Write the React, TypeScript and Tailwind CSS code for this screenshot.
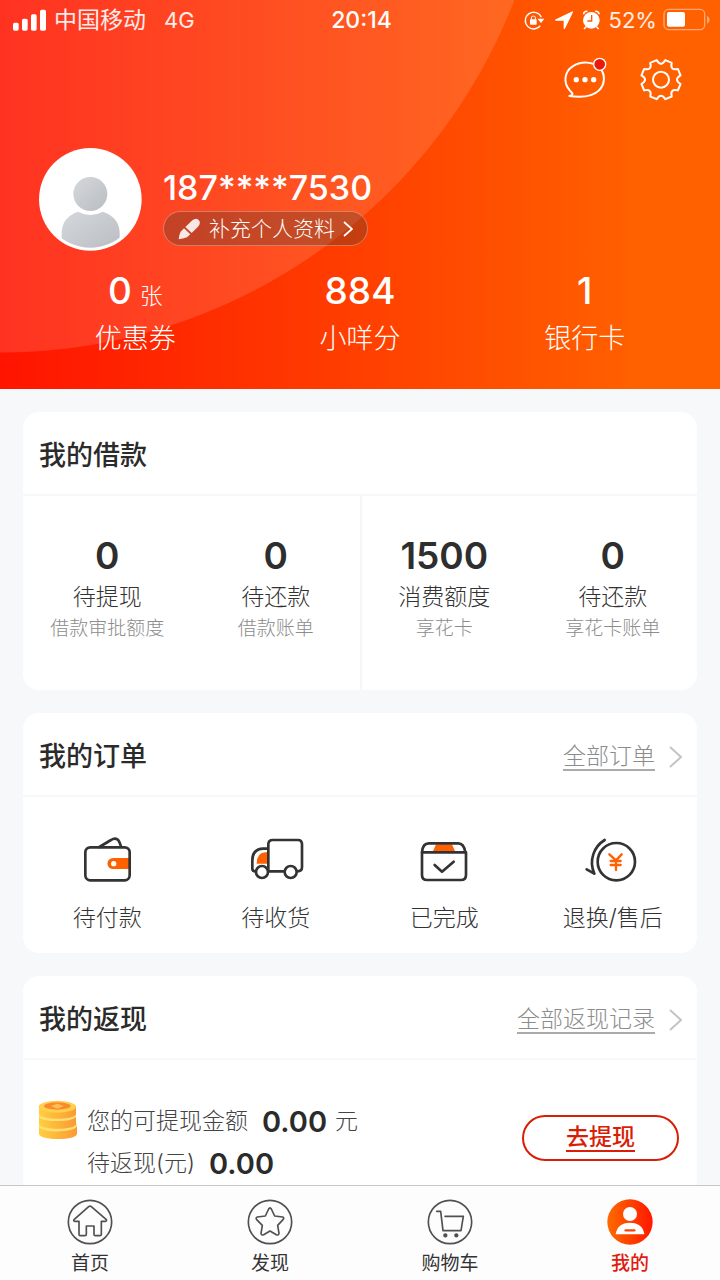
import type { ReactNode } from "react";

const INK = "#333333";
const ORANGE = "#ff6000";

function StatusBar() {
  return (
    <div className="grid h-10 grid-cols-3 items-center pr-2.5 pl-[13px] text-[23px] text-white/90">
      <div className="flex items-center">
        <svg className="h-[22px] w-[33px]" viewBox="0 0 99 66" fill="#fff" aria-hidden="true">
          <rect x="0" y="41" width="17" height="24" rx="5" />
          <rect x="27" y="29" width="17" height="36" rx="5" />
          <rect x="54" y="16" width="17" height="49" rx="5" />
          <rect x="81" y="2" width="18" height="63" rx="5" />
        </svg>
        <span className="ml-2">中国移动</span>
        <span className="ml-[18px] text-[22px]">4G</span>
      </div>
      <div className="text-center font-medium text-white">20:14</div>
      <div className="flex items-center justify-end">
        <svg className="h-6 w-20 shrink-0" viewBox="126 24 240 72" fill="none" aria-hidden="true">
          <path d="M181 52A25 25 0 1 0 178 77" stroke="#fff" strokeWidth="4" />
          <path d="M169 56h21l-10 13z" fill="#fff" />
          <rect x="147" y="58" width="20" height="16" rx="2" fill="#fff" />
          <path d="M151 59v-5a6 6 0 0 1 12 0v5" stroke="#fff" strokeWidth="3" />
          <path d="M274 36 224 60h26v25z" fill="#fff" stroke="#fff" strokeWidth="4" strokeLinejoin="round" />
          <circle cx="331" cy="61" r="25" fill="#fff" />
          <path d="M308 43a9 9 0 0 1 11-9M343 34a9 9 0 0 1 11 9M315 81l-6 6M347 81l6 6" stroke="#fff" strokeWidth="5" />
          <path d="M332 45v18h-13" stroke="#ff5a00" strokeWidth="4" />
        </svg>
        <span className="ml-1.5 text-[22px]">52%</span>
        <svg className="ml-1.5 h-6 w-[47px] shrink-0" viewBox="548 24 141 72" fill="none" aria-hidden="true">
          <rect x="551" y="28" width="122" height="61" rx="14" stroke="#fff" strokeOpacity=".45" strokeWidth="4" />
          <rect x="560" y="36" width="54" height="44" rx="6" fill="#fff" />
          <path d="M680 47q8 4 8 12t-8 12z" fill="#fff" fillOpacity=".45" />
        </svg>
      </div>
    </div>
  );
}

function gearPath(cx: number, cy: number) {
  const teeth = 8;
  const parts: string[] = [];
  const at = (deg: number, r: number) => {
    const a = (deg * Math.PI) / 180;
    return `${(cx + r * Math.cos(a)).toFixed(1)} ${(cy + r * Math.sin(a)).toFixed(1)}`;
  };
  for (let i = 0; i < teeth; i++) {
    const mid = i * (360 / teeth) + 22.5;
    parts.push(`${i === 0 ? "M" : "L"}${at(mid - 10, 60)}L${at(mid + 10, 60)}`);
    parts.push(`Q${at(mid + 15, 48)} ${at(mid + 22.5, 48)}Q${at(mid + 30, 48)} ${at(mid + 35, 60)}`);
  }
  return parts.join("") + "Z";
}

function Header() {
  const stats = [
    { value: "0", unit: "张", label: "优惠券" },
    { value: "884", label: "小咩分" },
    { value: "1", label: "银行卡" },
  ];
  return (
    <header className="bg-[radial-gradient(circle_at_0_-199px,rgba(255,255,255,.13)_551px,transparent_552px),linear-gradient(to_right,#ff1400,#ff6000_88%)] pb-[34px] text-white">
      <StatusBar />
      <div className="flex h-20 items-center justify-end gap-7 pr-[35px]">
        <button type="button" aria-label="消息">
          <svg className="h-12 w-12" viewBox="243 168 144 144" fill="none" stroke="#fff" strokeWidth="6" strokeLinejoin="round" aria-hidden="true">
            <path d="M268 288C284 284 276 278 270 272C248 248 254 214 278 199C304 182 340 185 358 203C378 222 375 253 357 271C338 290 306 293 268 288Z" />
            <g fill="#fff" stroke="none">
              <circle cx="289" cy="239" r="8" />
              <circle cx="315" cy="239" r="8" />
              <circle cx="341" cy="239" r="8" />
            </g>
            <circle cx="359" cy="193" r="18" fill="#e9190b" strokeWidth="4" />
          </svg>
        </button>
        <button type="button" aria-label="设置">
          <svg className="h-12 w-12" viewBox="471 168 144 144" fill="none" stroke="#fff" strokeWidth="6" strokeLinejoin="round" aria-hidden="true">
            <path d={gearPath(543, 239)} />
            <circle cx="543" cy="239" r="24" />
          </svg>
        </button>
      </div>
      <div className="mt-7 flex pl-[39px]">
        <svg className="h-[103px] w-[103px]" viewBox="56 54 309 309" aria-hidden="true">
          <defs>
            <linearGradient id="avatar" x1="0" y1="0" x2="1" y2="1">
              <stop offset="0" stopColor="#d5d8db" />
              <stop offset="1" stopColor="#b9bdc2" />
            </linearGradient>
            <clipPath id="avatarClip">
              <circle cx="210" cy="208" r="145" />
            </clipPath>
          </defs>
          <circle cx="210" cy="208" r="154" fill="#fff" />
          <circle cx="210" cy="192" r="51" fill="url(#avatar)" />
          <path clipPath="url(#avatarClip)" d="M173 245Q210 265 247 245Q298 262 298 310V363H124V310Q124 262 173 245Z" fill="url(#avatar)" />
        </svg>
        <div className="flex flex-col items-start pt-5 pl-[21px]">
          <div className="text-[34px] leading-[40px] font-medium">187****7530</div>
          <button type="button" className="mt-[3px] flex h-[35px] items-center rounded-full border border-white/30 bg-[#3c3c32]/30 pr-3.5 pl-3.5 text-[21px] font-light">
            <svg className="h-[22px] w-[22px]" viewBox="0 0 66 66" fill="#fff" fillOpacity=".88" aria-hidden="true">
              <path d="M22 27 43 7Q54-2 62 6T60 26L41 45Z" />
              <path d="M18 31 37 49 27 58Q15 63 2 64Q4 47 8 41Z" />
            </svg>
            <span className="ml-[9px]">补充个人资料</span>
            <svg className="ml-2 h-4 w-2.5" viewBox="0 0 10 16" fill="none" stroke="#fff" strokeWidth="1.8" aria-hidden="true">
              <path d="m1 1 8 7-8 7" />
            </svg>
          </button>
        </div>
      </div>
      <div className="mt-[18px] grid grid-cols-3 px-[23px] text-center">
        {stats.map((s) => (
          <div key={s.label}>
            <div className="flex h-11 items-baseline justify-center text-[37px] leading-[44px] font-medium">
              {s.value}
              {s.unit && <span className="ml-2 text-[23px] leading-none font-light">{s.unit}</span>}
            </div>
            <div className="mt-2.5 text-[27px] leading-8 font-light">{s.label}</div>
          </div>
        ))}
      </div>
    </header>
  );
}

function Card({ title, link, children }: { title: string; link?: string; children: ReactNode }) {
  return (
    <section className="rounded-2xl bg-white">
      <div className="flex h-[84px] items-center justify-between border-b-2 border-[#f8f8f9] pt-1.5 pr-[15px] pl-4">
        <h2 className="text-[27px] font-medium text-[#2b2b2b]">{title}</h2>
        {link && (
          <a href="#all" className="flex items-center text-[23px] font-light text-[#8c8c8c]">
            <span className="border-b-2 border-[#aaa] leading-[25px]">{link}</span>
            <svg className="ml-3.5 h-[22px] w-[13px]" viewBox="0 0 13 22" fill="none" stroke="#c4c4c8" strokeWidth="2" aria-hidden="true">
              <path d="m1 1 11 10L1 21" />
            </svg>
          </a>
        )}
      </div>
      {children}
    </section>
  );
}

function LoanCard() {
  const items = [
    { value: "0", label: "待提现", note: "借款审批额度" },
    { value: "0", label: "待还款", note: "借款账单" },
    { value: "1500", label: "消费额度", note: "享花卡" },
    { value: "0", label: "待还款", note: "享花卡账单" },
  ];
  return (
    <Card title="我的借款">
      <div className="grid grid-cols-4">
        {items.map((it, i) => (
          <div
            key={it.note}
            className={
              i === 2
                ? "border-l-2 border-[#f6f6f8] pt-[38px] pr-0.5 pb-[47px] text-center"
                : "pt-[38px] pb-[47px] text-center"
            }
          >
            <div className="text-[37px] leading-[44px] font-semibold text-[#2e2e2e]">{it.value}</div>
            <div className="mt-[3px] text-[23px] leading-8 font-light text-[#333]">{it.label}</div>
            <div className="mt-0.5 text-[19px] leading-7 font-light text-[#8c8c8c]">{it.note}</div>
          </div>
        ))}
      </div>
    </Card>
  );
}

function OrderIcon({ viewBox, children }: { viewBox: string; children: ReactNode }) {
  return (
    <svg className="h-[60px] w-[60px]" viewBox={viewBox} fill="none" stroke={INK} strokeWidth="8" strokeLinecap="round" strokeLinejoin="round" aria-hidden="true">
      {children}
    </svg>
  );
}

function OrdersCard() {
  const items = [
    {
      label: "待付款",
      icon: (
        <OrderIcon viewBox="51 27 180 180">
          <path d="M118 78 153 57Q164 50 172 55Q178 59 183 77" />
          <path d="M208 111H159a16 16 0 0 0 0 33H208Z" fill={ORANGE} stroke="none" />
          <circle cx="161" cy="128" r="8" fill="#fff" stroke="none" />
          <rect x="76" y="79" width="133" height="99" rx="15" />
        </OrderIcon>
      ),
    },
    {
      label: "待收货",
      icon: (
        <OrderIcon viewBox="557 27 180 180">
          <path d="M624 94H614Q589 96 589 128H624Z" fill={ORANGE} stroke="none" />
          <path d="M624 83H608Q576 85 576 118V143Q576 151 586 151M624 151V70Q624 57 637 57H713Q725 57 725 70V139Q725 151 711 151M624 151H672" />
          <circle cx="605" cy="153" r="18" fill="#fff" />
          <circle cx="691" cy="153" r="18" fill="#fff" />
        </OrderIcon>
      ),
    },
    {
      label: "已完成",
      icon: (
        <OrderIcon viewBox="72 27 180 180">
          <path d="M138 70H186L196 93H128Z" fill={ORANGE} stroke="none" />
          <path d="M96 94Q98 67 116 67H205Q222 67 226 94" />
          <path d="M96 94H228V162Q228 177 213 177H111Q96 177 96 162Z" />
          <path d="m134 132 22 20 35-30" />
        </OrderIcon>
      ),
    },
    {
      label: "退换/售后",
      icon: (
        <OrderIcon viewBox="578 27 180 180">
          <circle cx="678" cy="122" r="56" />
          <path d="M643 57C612 76 594 117 612 158M589 145 612 158" />
          <g stroke={ORANGE} strokeWidth="7">
            <path d="m657 100 20 18 17-18M677 118V147M661 120H691M661 132H691" />
          </g>
        </OrderIcon>
      ),
    },
  ];
  return (
    <Card title="我的订单" link="全部订单">
      <div className="grid grid-cols-4 pt-[33px] pb-[19px]">
        {items.map((it) => (
          <button type="button" key={it.label} className="flex flex-col items-center">
            {it.icon}
            <span className="mt-3 text-[23px] leading-8 font-light text-[#333]">{it.label}</span>
          </button>
        ))}
      </div>
    </Card>
  );
}

function CashbackCard() {
  return (
    <Card title="我的返现" link="全部返现记录">
      <div className="flex items-center justify-between pt-10 pr-[18px] pb-6 pl-[15px]">
        <div className="flex">
          <svg className="h-10 w-10" viewBox="54 57 120 120" aria-hidden="true">
            <defs>
              <linearGradient id="coin">
                <stop offset="0" stopColor="#ffcf3e" />
                <stop offset="1" stopColor="#fb9a35" />
              </linearGradient>
            </defs>
            <path d="M57 138V158C57 179 171 179 171 158V134Z" fill="url(#coin)" />
            <path d="M57 128V137C62 156 165 156 170 136V127Z" fill="#ffdf74" />
            <path d="M57 108V130C62 148 168 148 168 129V108Z" fill="url(#coin)" />
            <path d="M57 99V107C62 125 168 125 168 105V99Z" fill="#ffdf74" />
            <path d="M57 77V99C60 118 168 118 168 98V77Z" fill="url(#coin)" />
            <ellipse cx="112" cy="77" rx="56" ry="18" fill="#ffd04e" />
            <ellipse cx="112" cy="75" rx="40" ry="11" fill="#f98b2c" />
            <path d="m93 75 19-7 19 7-19 8z" fill="#ffbd59" />
          </svg>
          <div className="pl-[9px] text-[23px] leading-none font-light text-[#444]">
            <div className="flex h-[42px] items-center">
              您的可提现金额
              <strong className="ml-3.5 text-[29px] font-semibold text-[#2b2b2b]">0.00</strong>
              <span className="ml-2">元</span>
            </div>
            <div className="flex h-[42px] items-center">
              待返现(元)
              <strong className="ml-3.5 text-[29px] font-semibold text-[#2b2b2b]">0.00</strong>
            </div>
          </div>
        </div>
        <button type="button" className="-mt-2 flex h-[46px] w-[157px] items-center justify-center rounded-full border-2 border-[#d81e06] text-[23px] font-medium text-[#d81e06]">
          <span className="border-b-2 border-[#d81e06] leading-[25px]">去提现</span>
        </button>
      </div>
    </Card>
  );
}

function NavItem({ label, active, viewBox, children }: { label: string; active?: boolean; viewBox: string; children: ReactNode }) {
  return (
    <a href="#tab" className={active ? "flex flex-col items-center text-[#e01b10]" : "flex flex-col items-center text-[#333]"}>
      <svg className="h-12 w-12" viewBox={viewBox} fill="none" stroke="#505050" strokeWidth="5" strokeLinejoin="round" strokeLinecap="round" aria-hidden="true">
        {children}
      </svg>
      <span className={active ? "mt-1.5 text-[19px] leading-6 font-medium" : "mt-1.5 text-[19px] leading-6"}>{label}</span>
    </a>
  );
}

function BottomNav() {
  return (
    <nav className="grid grid-cols-4 border-t border-[#c8c8cc] bg-[#fdfdfd] pt-3 pb-1">
      <NavItem label="首页" viewBox="78 54 144 144">
        <circle cx="150" cy="126" r="65" />
        <path d="M146 80Q150 77 154 80L199 119Q201 124 196 124H184V163Q184 167 180 167H166Q162 167 162 163V138H139V163Q139 167 135 167H121Q117 167 117 163V124H105Q99 124 102 119Z" />
      </NavItem>
      <NavItem label="发现" viewBox="618 54 144 144">
        <circle cx="690" cy="126" r="65" />
        <path d="M686 87Q690 80 694 87L704 108 728 111Q734 114 729 119L713 136 717 160Q716 167 709 164L690 153 671 164Q664 167 663 160L667 136 650 119Q646 113 652 111L676 108Z" />
      </NavItem>
      <NavItem label="购物车" viewBox="77 54 144 144">
        <circle cx="149" cy="126" r="65" />
        <path d="M109 94H121L128 152H182L189 109H134" />
        <circle cx="135" cy="166" r="4" fill="#505050" />
        <circle cx="168" cy="166" r="4" fill="#505050" />
      </NavItem>
      <NavItem label="我的" active viewBox="617 54 144 144">
        <defs>
          <linearGradient id="me">
            <stop offset="0" stopColor="#ff6a00" />
            <stop offset="1" stopColor="#ff1800" />
          </linearGradient>
        </defs>
        <circle cx="689" cy="126" r="68" fill="url(#me)" stroke="none" />
        <circle cx="689" cy="102" r="21" fill="#fff" stroke="none" />
        <path d="M646 163Q651 128 689 128T732 163Z" fill="#fff" stroke="none" />
        <path d="M676 151H702" stroke="#ff4000" strokeWidth="7" />
      </NavItem>
    </nav>
  );
}

export default function App() {
  return (
    <div className="flex h-screen flex-col bg-[#f7f8fa] font-['Inter','Noto_Sans_CJK_SC',sans-serif]">
      <main className="min-h-0 flex-1 overflow-y-auto [scrollbar-width:none]">
        <Header />
        <div className="flex flex-col gap-[23px] px-[23px] pt-[23px]">
          <LoanCard />
          <OrdersCard />
          <CashbackCard />
        </div>
      </main>
      <BottomNav />
    </div>
  );
}
